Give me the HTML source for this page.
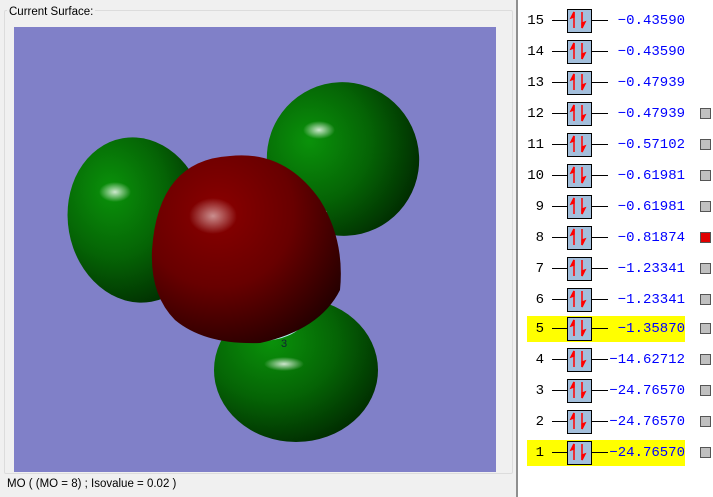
<!DOCTYPE html>
<html><head><style>
body{margin:0;width:713px;height:497px;background:#f0f0f0;position:relative;overflow:hidden;font-family:"Liberation Sans",sans-serif}
.grp{position:absolute;left:4px;top:10px;width:507px;height:462px;border:1px solid #dcdcdc;border-radius:2px}
.lbl{position:absolute;left:2px;top:-5px;font-size:11.5px;background:#f0f0f0;padding:0 2px;color:#000}
.canvas{position:absolute;left:14px;top:27px;width:482px;height:445px;background:#8080c8}
.status{position:absolute;left:7px;top:478px;font-size:11.5px}
.rp{position:absolute;left:516px;top:0;width:197px;height:497px;background:#fff;border-left:2px solid #8f8f8f}
.row{position:absolute;left:0;width:197px;height:26px;font-family:"Liberation Mono",monospace;font-size:14px}
.hl{position:absolute;left:9px;width:158px;height:26px;background:#ffff00;top:0}
.num{position:absolute;left:1px;width:25px;text-align:right;top:5px;color:#000}
.ln{position:absolute;left:34px;width:56px;top:12px;height:1px;background:#000}
.box{position:absolute;left:49px;top:1px;width:23px;height:22px;background:#a3bfdc;border:1px solid #000}
.val{position:absolute;right:30px;top:5px;color:#0000ff}
.cb{position:absolute;left:182px;top:7px;width:9px;height:9px;background:#c0c0c0;border:1px solid #555}
</style></head><body>
<div class="grp"><div class="lbl">Current Surface:</div></div>
<div class="canvas">
<svg width="482" height="445" viewBox="14 27 482 445" xmlns="http://www.w3.org/2000/svg">
<defs>
<radialGradient id="g" cx="0.35" cy="0.3" r="0.8"><stop offset="0" stop-color="#0a920a"/><stop offset="0.5" stop-color="#056405"/><stop offset="1" stop-color="#002500"/></radialGradient>
<radialGradient id="r" cx="0.35" cy="0.3" r="0.8"><stop offset="0" stop-color="#8a0000"/><stop offset="0.5" stop-color="#680000"/><stop offset="1" stop-color="#200000"/></radialGradient>
<radialGradient id="s"><stop offset="0" stop-color="#fff" stop-opacity=".8"/><stop offset="1" stop-color="#fff" stop-opacity="0"/></radialGradient>
</defs>
<ellipse cx="343" cy="159" rx="76" ry="77" fill="url(#g)" transform="rotate(-25 343 159)"/>
<ellipse cx="319" cy="130" rx="16" ry="9" fill="url(#s)"/>
<path d="M290 175 Q310 190 327 212 L320 215 Q305 195 288 180Z" fill="#b0f0f0"/>
<ellipse cx="137" cy="220" rx="69" ry="83" fill="url(#g)" transform="rotate(-10 137 220)"/>
<ellipse cx="115" cy="192" rx="16" ry="10" fill="url(#s)"/>
<ellipse cx="296" cy="370" rx="82" ry="72" fill="url(#g)"/>
<ellipse cx="284" cy="364" rx="20" ry="7" fill="url(#s)"/>
<path d="M265 338 Q290 332 300 322 L298 330 Q285 340 262 341Z" fill="#b0f0f0"/>
<path d="M230 156 Q285 150 320 200 Q345 240 340 290 Q320 330 260 343 Q205 345 175 320 Q150 295 152 250 Q158 160 230 156Z" fill="url(#r)"/>
<ellipse cx="213" cy="216" rx="24" ry="18" fill="url(#s)" opacity=".7"/>
<text x="281" y="347" font-size="11" font-family="Liberation Sans" fill="#123">3</text>
</svg>
</div>
<div class="status">MO ( (MO = 8) ; Isovalue = 0.02 )</div>
<div class="rp">
<div class="row" style="top:8px"><div class="num">15</div><div class="ln"></div><div class="box"></div><div class="val">−0.43590</div></div>
<div class="row" style="top:39px"><div class="num">14</div><div class="ln"></div><div class="box"></div><div class="val">−0.43590</div></div>
<div class="row" style="top:70px"><div class="num">13</div><div class="ln"></div><div class="box"></div><div class="val">−0.47939</div></div>
<div class="row" style="top:101px"><div class="num">12</div><div class="ln"></div><div class="box"></div><div class="val">−0.47939</div><div class="cb"></div></div>
<div class="row" style="top:132px"><div class="num">11</div><div class="ln"></div><div class="box"></div><div class="val">−0.57102</div><div class="cb"></div></div>
<div class="row" style="top:163px"><div class="num">10</div><div class="ln"></div><div class="box"></div><div class="val">−0.61981</div><div class="cb"></div></div>
<div class="row" style="top:194px"><div class="num">9</div><div class="ln"></div><div class="box"></div><div class="val">−0.61981</div><div class="cb"></div></div>
<div class="row" style="top:225px"><div class="num">8</div><div class="ln"></div><div class="box"></div><div class="val">−0.81874</div><div class="cb" style="background:#e00000"></div></div>
<div class="row" style="top:256px"><div class="num">7</div><div class="ln"></div><div class="box"></div><div class="val">−1.23341</div><div class="cb"></div></div>
<div class="row" style="top:287px"><div class="num">6</div><div class="ln"></div><div class="box"></div><div class="val">−1.23341</div><div class="cb"></div></div>
<div class="row" style="top:316px"><div class="hl"></div><div class="num">5</div><div class="ln"></div><div class="box"></div><div class="val">−1.35870</div><div class="cb"></div></div>
<div class="row" style="top:347px"><div class="num">4</div><div class="ln"></div><div class="box"></div><div class="val">−14.62712</div><div class="cb"></div></div>
<div class="row" style="top:378px"><div class="num">3</div><div class="ln"></div><div class="box"></div><div class="val">−24.76570</div><div class="cb"></div></div>
<div class="row" style="top:409px"><div class="num">2</div><div class="ln"></div><div class="box"></div><div class="val">−24.76570</div><div class="cb"></div></div>
<div class="row" style="top:440px"><div class="hl"></div><div class="num">1</div><div class="ln"></div><div class="box"></div><div class="val">−24.76570</div><div class="cb"></div></div>
</div>
<svg style="position:absolute;left:0;top:0" width="713" height="497">
<defs><g id="arr" stroke="#f00" stroke-width="1.5" fill="#f00"><path d="M5 4 V20" fill="none"/><path d="M5 4 L2 10 L5 9Z"/><path d="M13 4 V20" fill="none"/><path d="M13 20 L16 14 L13 15Z"/></g></defs>
<use href="#arr" x="569" y="8"/><use href="#arr" x="569" y="39"/><use href="#arr" x="569" y="70"/><use href="#arr" x="569" y="101"/><use href="#arr" x="569" y="132"/><use href="#arr" x="569" y="163"/><use href="#arr" x="569" y="194"/><use href="#arr" x="569" y="225"/><use href="#arr" x="569" y="256"/><use href="#arr" x="569" y="287"/><use href="#arr" x="569" y="316"/><use href="#arr" x="569" y="347"/><use href="#arr" x="569" y="378"/><use href="#arr" x="569" y="409"/><use href="#arr" x="569" y="440"/>
</svg>
</body></html>
